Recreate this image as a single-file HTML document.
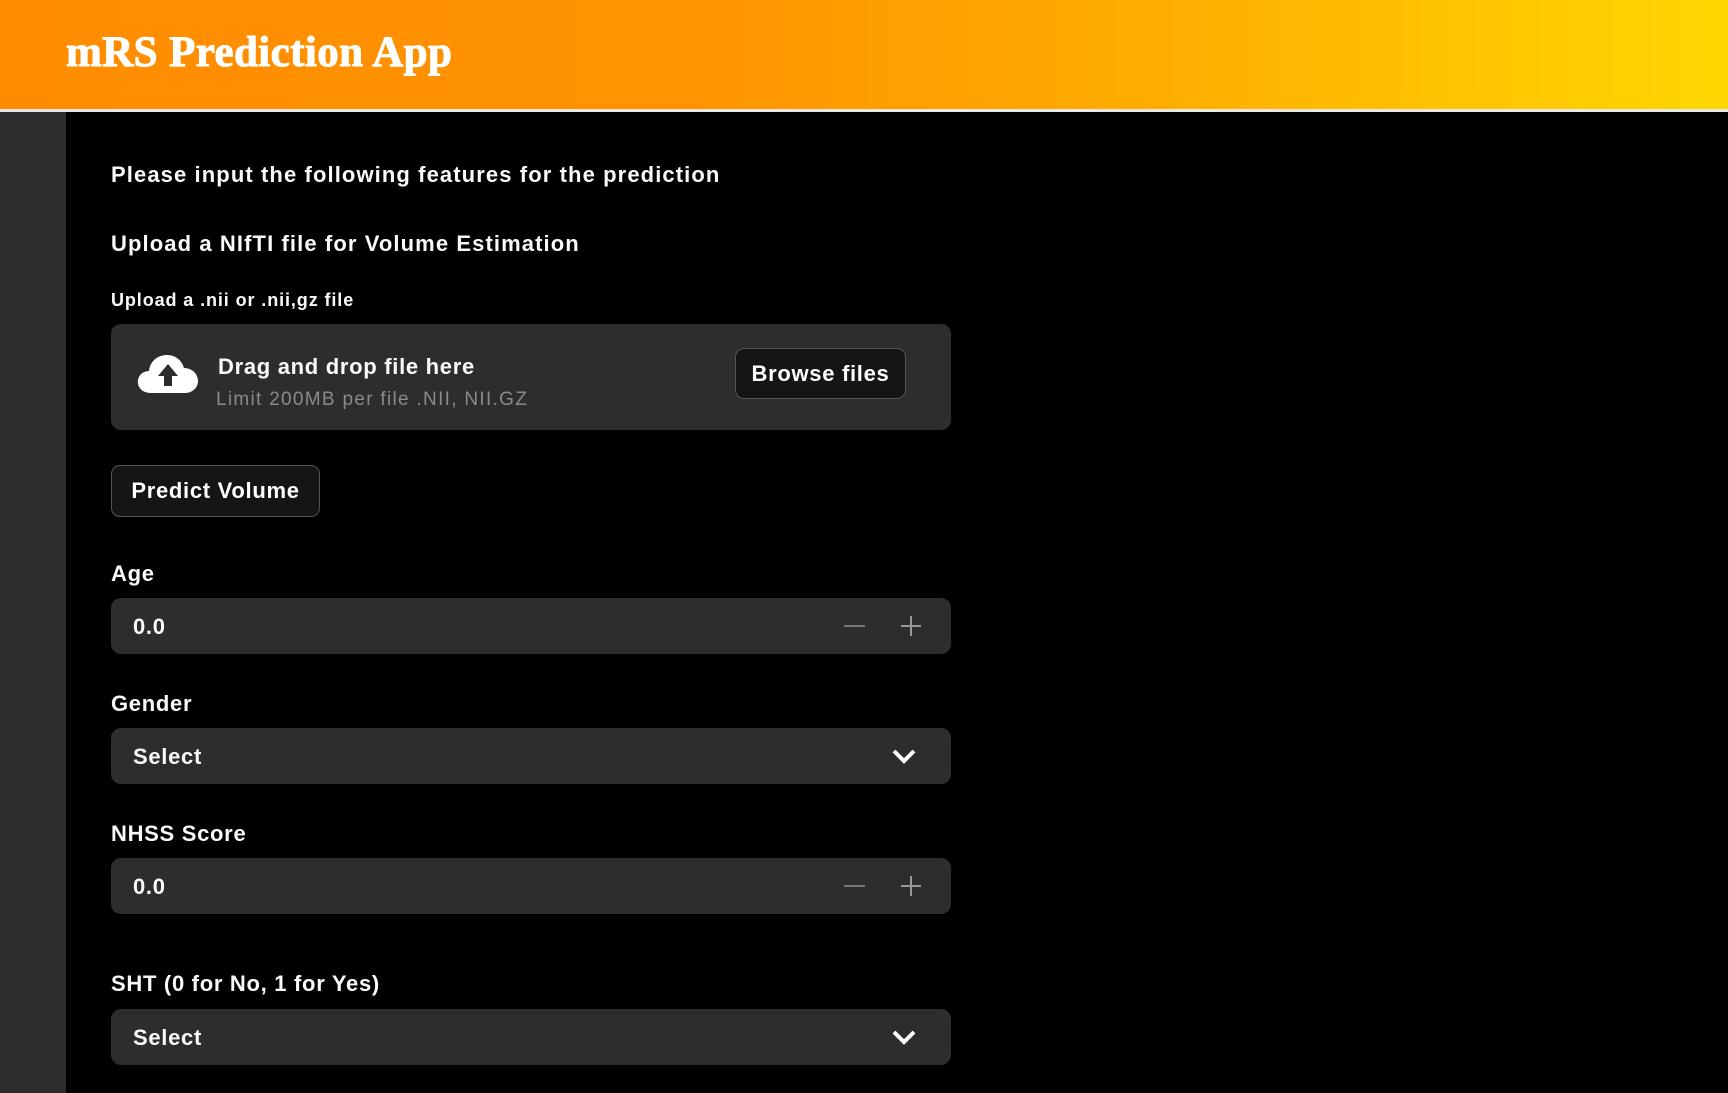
<!DOCTYPE html>
<html><head><meta charset="utf-8"><style>
*{margin:0;padding:0;box-sizing:border-box}
body{width:1728px;height:1093px;background:#000;overflow:hidden;font-family:"Liberation Sans",sans-serif;color:#fafafa;position:relative;font-weight:bold;letter-spacing:0.7px}
.hdr{position:absolute;left:0;top:0;width:1728px;height:109px;background:linear-gradient(90deg,#ff8c00 0%,#ff9400 40%,#ffab00 65%,#ffd700 100%)}
.hdr h1{position:absolute;left:66px;top:28px;font-family:"Liberation Serif",serif;font-weight:900;font-size:43px;color:#fff;letter-spacing:0.4px;-webkit-text-stroke:1px #fff}
.line{position:absolute;left:0;top:109px;width:1728px;height:3px;background:#e8e8e8}
.side{position:absolute;left:0;top:112px;width:66px;height:981px;background:#2c2c2e}
.t{position:absolute;left:111px;white-space:nowrap}
.box{position:absolute;left:111px;width:840px;background:#2d2d2f;border-radius:10px}
.btn{position:absolute;background:#151515;border:1px solid #555;border-radius:9px;font-size:22px;color:#fff;display:flex;align-items:center;justify-content:center}
.val{position:absolute;left:22px;top:16px;font-size:22px}
</style></head><body>
<div class="hdr"><h1>mRS Prediction App</h1></div>
<div class="line"></div>
<div class="side"></div>
<div class="t" style="top:162px;font-size:22px;letter-spacing:1.1px">Please input the following features for the prediction</div>
<div class="t" style="top:231px;font-size:22px;letter-spacing:1.1px">Upload a NIfTI file for Volume Estimation</div>
<div class="t" style="top:290px;font-size:18px;letter-spacing:0.9px">Upload a .nii or .nii,gz file</div>
<div class="box" style="top:324px;height:106px">
 <svg style="position:absolute;left:26px;top:30px" width="62" height="40" viewBox="0 0 62 40"><path d="M14 39 C4 39 0 32 1 26 C2 20 7 17 12 17 C13 7 21 1 30 1 C39 1 45 7 47 14 C55 14 61 20 61 27 C61 34 55 39 48 39 Z" fill="#fff"/><path d="M31 10 L21 22 H27 V32 H35 V22 H41 Z" fill="#2d2d2f"/></svg>
 <div style="position:absolute;left:107px;top:30px;font-size:22px">Drag and drop file here</div>
 <div style="position:absolute;left:105px;top:65px;font-size:19px;color:#8a8a8a;font-weight:normal;letter-spacing:1.3px">Limit 200MB per file .NII, NII.GZ</div>
 <div class="btn" style="left:624px;top:24px;width:171px;height:51px">Browse files</div>
</div>
<div class="btn" style="left:111px;top:465px;width:209px;height:52px">Predict Volume</div>
<div class="t" style="top:561px;font-size:22px">Age</div>
<div class="box" style="top:598px;height:56px"><div class="val">0.0</div>
 <div style="position:absolute;left:733px;top:27px;width:21px;height:2px;background:#777"></div>
 <div style="position:absolute;left:790px;top:27px;width:20px;height:2px;background:#999"></div>
 <div style="position:absolute;left:799px;top:18px;width:2px;height:20px;background:#999"></div>
</div>
<div class="t" style="top:691px;font-size:22px">Gender</div>
<div class="box" style="top:728px;height:56px"><div class="val">Select</div>
 <svg style="position:absolute;left:780px;top:19px" width="26" height="18" viewBox="0 0 26 18"><path d="M3 4 L13 14 L23 4" stroke="#fff" stroke-width="4" fill="none"/></svg></div>
<div class="t" style="top:821px;font-size:22px">NHSS Score</div>
<div class="box" style="top:858px;height:56px"><div class="val">0.0</div>
 <div style="position:absolute;left:733px;top:27px;width:21px;height:2px;background:#777"></div>
 <div style="position:absolute;left:790px;top:27px;width:20px;height:2px;background:#999"></div>
 <div style="position:absolute;left:799px;top:18px;width:2px;height:20px;background:#999"></div>
</div>
<div class="t" style="top:971px;font-size:22px">SHT (0 for No, 1 for Yes)</div>
<div class="box" style="top:1009px;height:56px"><div class="val">Select</div>
 <svg style="position:absolute;left:780px;top:19px" width="26" height="18" viewBox="0 0 26 18"><path d="M3 4 L13 14 L23 4" stroke="#fff" stroke-width="4" fill="none"/></svg></div>
</body></html>
